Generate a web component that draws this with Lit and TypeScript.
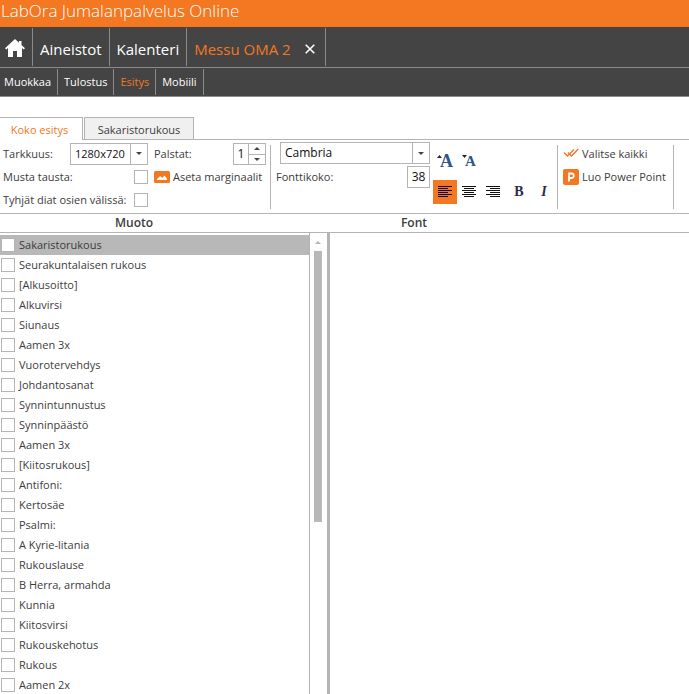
import { LitElement, html, css, svg } from "lit";
import { customElement, state } from "lit/decorators.js";
import { classMap } from "lit/directives/class-map.js";

const ROWS = [
  "Sakaristorukous", "Seurakuntalaisen rukous", "[Alkusoitto]", "Alkuvirsi", "Siunaus",
  "Aamen 3x", "Vuorotervehdys", "Johdantosanat", "Synnintunnustus", "Synninpäästö",
  "Aamen 3x", "[Kiitosrukous]", "Antifoni:", "Kertosäe", "Psalmi:", "A Kyrie-litania",
  "Rukouslause", "B Herra, armahda", "Kunnia", "Kiitosvirsi", "Rukouskehotus", "Rukous",
  "Aamen 2x",
];

const alignIcon = (align: string) => html`
  <svg width="16" height="12" viewBox="0 0 16 12" shape-rendering="crispEdges" aria-hidden="true">
    ${[14, 10, 14, 10, 14, 10].map((w, i) => {
      const x = align === "left" ? 1 : align === "center" ? 1 + (14 - w) / 2 : 15 - w;
      return svg`<rect x=${x} y=${i * 2} width=${w} height="1" fill="#111"/>`;
    })}
  </svg>`;

const down = html`<svg width="6" height="3" viewBox="0 0 6 3" aria-hidden="true"><path d="M0 0h6L3 3z" fill="#444"/></svg>`;
const up = html`<svg width="6" height="3" viewBox="0 0 6 3" aria-hidden="true"><path d="M0 3h6L3 0z" fill="#444"/></svg>`;

@customElement("app-root")
export class AppRoot extends LitElement {
  @state() private selected = 0;
  @state() private align = "left";

  static styles = css`
    :host {
      display: flex;
      flex-direction: column;
      height: 100vh;
      overflow: hidden;
      background: #fff;
      color: #3c3c3c;
      font: 11px/20px "Open Sans", "Noto Sans", sans-serif;
    }
    * { box-sizing: border-box; }
    button, input, select { font: inherit; color: inherit; margin: 0; padding: 0; border: 0; background: none; border-radius: 0; }
    a { color: inherit; text-decoration: none; }
    svg { display: block; flex: none; }
    .title {
      margin: 0;
      height: 27px;
      padding-left: 1px;
      background: #f47721;
      color: #fff;
      font-size: 17px;
      font-weight: 300;
      line-height: 22px;
      white-space: nowrap;
      flex: none;
    }
    .nav { display: flex; background: #444; color: #fff; border-bottom: 1px solid #8a8a8a; white-space: nowrap; flex: none; }
    .nav > * { display: flex; align-items: center; justify-content: center; border-right: 1px solid #8a8a8a; }
    .main { height: 41px; font-size: 15px; padding: 1px 0; }
    .main > * { padding: 4px 7px 0 7px; }
    .main .home { width: 33px; padding: 2px 2px 0 0; }
    .main .doc { gap: 14px; padding-right: 10px; }
    .sub { height: 29px; padding: 1px 0; font-weight: 500; }
    .sub > * { padding: 0 6px; }
    .sub > :first-child { padding-left: 4px; }
    .active { color: #f47721; }
    .close { color: #fff; }
    .tabs { display: flex; gap: 1px; height: 43px; padding-top: 20px; border-bottom: 1px solid #b4b4b4; flex: none; }
    .tab { height: 22px; border: 1px solid #b4b4b4; border-bottom: 0; background: #f0f0f0; width: 110px; padding-top: 2px; line-height: 18px; white-space: nowrap; }
    .tab.current { width: 83px; height: 23px; margin-bottom: -1px; border-left: 0; background: #fff; color: #f47721; padding-right: 3px; }
    .tools { display: flex; align-items: flex-start; height: 74px; border-bottom: 1px solid #b4b4b4; padding-top: 2px; flex: none; white-space: nowrap; }
    .group { display: flex; gap: 6px; align-items: flex-start; }
    .group + .sep { margin-left: 4px; }
    .sep { width: 1px; height: 64px; margin-top: 3px; background: #b4b4b4; flex: none; }
    .stack { display: grid; grid-template-columns: minmax(0, 1fr); grid-auto-rows: 23px; flex: none; }
    .row { display: flex; align-items: center; justify-content: space-between; }
    .options { width: 145px; margin-left: 3px; }
    .columns { width: 112px; }
    .combo { display: grid; grid-template-columns: minmax(0, 1fr) 17px; height: 22px; border: 1px solid #b4b4b4; color: #111; }
    .combo select { grid-area: 1 / 1 / 2 / 3; appearance: none; padding-left: 4px; width: 100%; }
    .combo span { grid-area: 1 / 2; display: grid; place-items: center; border-left: 1px solid #b4b4b4; pointer-events: none; }
    .res { width: 78px; }
    .face { width: 150px; margin-left: 4px; }
    .check { appearance: none; width: 14px; height: 14px; border: 1px solid #b4b4b4; background: #fff; flex: none; display: grid; place-items: center; }
    .check:checked::after { content: ""; width: 8px; height: 8px; background: #f47721; }
    .spin { display: grid; grid-template: 10px 10px / 14px 17px; border: 1px solid #b4b4b4; height: 22px; color: #111; }
    .spin input { grid-row: span 2; width: 14px; text-align: center; font-size: 12px; }
    .spin button { display: grid; place-items: center; border-left: 1px solid #b4b4b4; height: 10px; }
    .spin button + button { border-top: 1px solid #b4b4b4; }
    .link { display: flex; align-items: center; gap: 3px; height: 23px; }
    .font { width: 154px; margin-left: 5px; }
    .face select { font-size: 12px; }
    .size { width: 23px; height: 22px; border: 1px solid #b4b4b4; text-align: center; color: #111; font-size: 12px; }
    .format { margin-left: 3px; display: grid; grid-template-columns: repeat(3, 24px) 26px 26px; grid-template-rows: 38px 24px; flex: none; }
    .format button { display: grid; place-items: center; color: #2b2b4a; font: bold 14px/20px "Liberation Serif", serif; }
    .format .on { background: #f47721; }
    .format .grow { display: flex; color: #2f5588; align-items: flex-start; justify-content: center; padding-top: 9px; }
    .format .big { font-size: 18px; }
    .format .small { font-size: 15px; }
    .format .grow svg { margin: 4px -2px 0 0; }
    .format .bold { padding-left: 2px; }
    .format .italic { font-style: italic; }
    .actions { margin-left: 5px; width: 110px; }
    .heads { display: grid; grid-template-columns: 268px 292px; height: 19px; font-size: 12px; line-height: 18px; text-align: center; font-weight: 600; border-bottom: 1px solid #b4b4b4; flex: none; }
    .body { display: flex; flex: 1; min-height: 0; }
    .list { width: 310px; padding: 2px 0 0; margin: 0; border-right: 1px solid #b4b4b4; overflow: hidden; list-style: none; }
    .item { display: flex; align-items: center; gap: 4px; height: 20px; padding: 0 0 1px 1px; }
    .item.selected { background: #b8b8b8; }
    .scroll { width: 17px; display: flex; flex-direction: column; align-items: center; padding: 8px 1px 0 0; gap: 7px; }
    .thumb { width: 8px; height: 60%; max-height: 271px; background: #b8b8b8; }
    .split { width: 3px; background: #b4b4b4; }
  `;

  render() {
    return html`
      <h1 class="title">LabOra Jumalanpalvelus Online</h1>
      <nav class="nav main">
        <a class="home" href="#" aria-label="Koti">
          <svg width="20" height="18" viewBox="0 0 20 18"><path d="M10 0 0 9.2l1.3 1.3 1.7-1.5V18h5v-6h4v6h5V9l1.7 1.5L20 9.2 16.5 6V2H14v1.7z" fill="#fff"/></svg>
        </a>
        <a href="#">Aineistot</a>
        <a href="#">Kalenteri</a>
        <div class="doc">
          <a class="active" href="#">Messu OMA 2</a>
          <button class="close" aria-label="Sulje">
            <svg width="10" height="10" viewBox="0 0 10 10"><path d="M.7.7l8.6 8.6M9.3.7L.7 9.3" stroke="#fff" stroke-width="1.6"/></svg>
          </button>
        </div>
      </nav>
      <nav class="nav sub">
        <a href="#">Muokkaa</a><a href="#">Tulostus</a><a class="active" href="#">Esitys</a><a href="#">Mobiili</a>
      </nav>
      <div class="tabs" role="tablist">
        <button class="tab current" role="tab" aria-selected="true">Koko esitys</button>
        <button class="tab" role="tab" aria-selected="false">Sakaristorukous</button>
      </div>
      <div class="tools">
        <div class="group">
          <div class="stack options">
            <div class="row">
              <label for="res">Tarkkuus:</label>
              <div class="combo res"><select id="res"><option>1280x720</option></select><span>${down}</span></div>
            </div>
            <div class="row"><label for="black">Musta tausta:</label><input class="check" type="checkbox" id="black"></div>
            <div class="row"><label for="blank">Tyhjät diat osien välissä:</label><input class="check" type="checkbox" id="blank"></div>
          </div>
          <div class="stack columns">
            <div class="row">
              <label for="cols">Palstat:</label>
              <div class="spin"><input id="cols" value="1"><button aria-label="Lisää">${up}</button><button aria-label="Vähennä">${down}</button></div>
            </div>
            <button class="link">
              <svg width="16" height="12" viewBox="0 0 16 12"><rect width="16" height="12" rx="1.5" fill="#f47721"/><path d="M3 9V8l3.200-3L8 7l2.500-2.500L13 7.500V9z" fill="#fff"/></svg>
              Aseta marginaalit
            </button>
          </div>
        </div>
        <div class="sep"></div>
        <div class="stack font">
          <div class="combo face"><select aria-label="Fontti"><option>Cambria</option></select><span>${down}</span></div>
          <div class="row"><label for="size">Fonttikoko:</label><input class="size" id="size" value="38"></div>
        </div>
        <div class="format">
          <button class="grow big" aria-label="Suurenna"><svg width="5" height="3" viewBox="0 0 5 3"><path d="M0 3h5L2.500 0z" fill="#223"/></svg>A</button>
          <button class="grow small" aria-label="Pienennä"><svg width="5" height="3" viewBox="0 0 5 3"><path d="M0 0h5L2.500 3z" fill="#223"/></svg>A</button>
          <span></span><span></span><span></span>
          ${["left", "center", "right"].map((a) => html`
            <button class=${classMap({ on: this.align === a })} aria-label=${a} @click=${() => (this.align = a)}>${alignIcon(a)}</button>`)}
          <button class="bold">B</button>
          <button class="italic">I</button>
        </div>
        <div class="sep"></div>
        <div class="stack actions">
          <button class="link">
            <svg width="16" height="11" viewBox="0 0 16 11"><path d="M1 4.500l3.500 3.500L11 1.500M5 4.500l3.500 3.500L15.300 1" fill="none" stroke="#f47721" stroke-width="1.400"/></svg>
            Valitse kaikki
          </button>
          <button class="link">
            <svg width="16" height="16" viewBox="0 0 16 16"><rect width="16" height="16" rx="2" fill="#f47721"/><path d="M6 12.500V4.500h2.500a2.200 2.200 0 0 1 0 4.500H6" fill="none" stroke="#fff" stroke-width="1.800"/></svg>
            Luo Power Point
          </button>
        </div>
        <div class="sep"></div>
      </div>
      <div class="heads"><span>Muoto</span><span>Font</span></div>
      <div class="body">
        <ul class="list">
          ${ROWS.map((name, i) => html`
            <li class=${classMap({ item: true, selected: this.selected === i })} @click=${() => (this.selected = i)}>
              <input class="check" type="checkbox" id="r${i}"><label for="r${i}">${name}</label>
            </li>`)}
        </ul>
        <div class="scroll">
          <svg width="6" height="3" viewBox="0 0 6 3"><path d="M0 3h6L3 0z" fill="#b4b4b4"/></svg>
          <div class="thumb"></div>
        </div>
        <div class="split"></div>
      </div>
    `;
  }
}
